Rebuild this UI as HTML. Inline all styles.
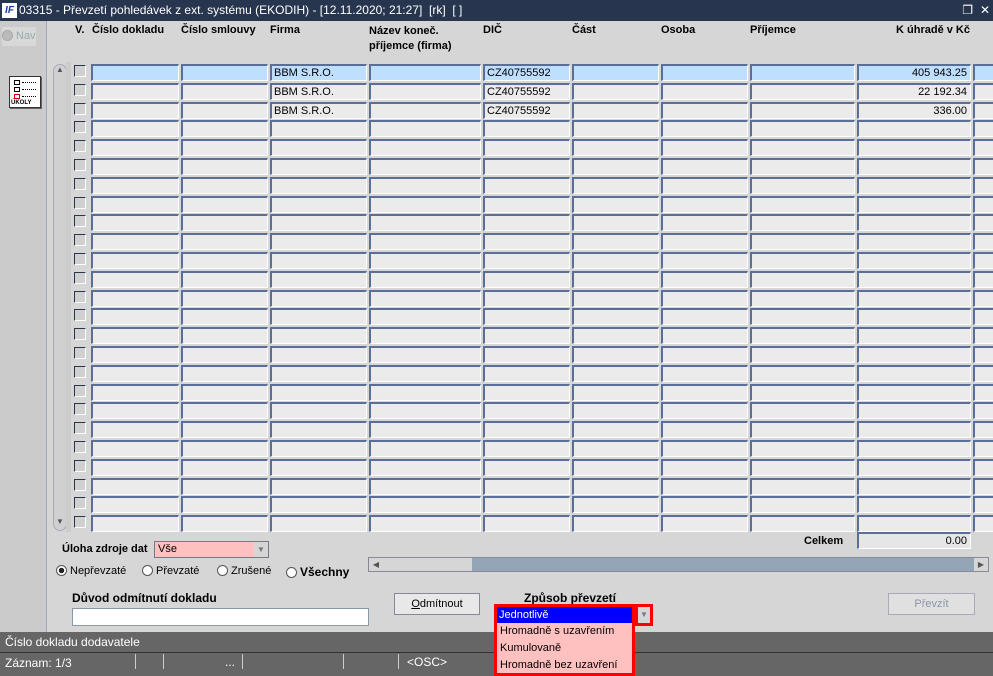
<!DOCTYPE html>
<html><head><meta charset="utf-8"><style>
*{box-sizing:border-box;margin:0;padding:0}
body{width:993px;height:676px;background:#d6d6d6;font-family:"Liberation Sans",Arial,sans-serif;font-size:11px;color:#000;position:relative;overflow:hidden}
.a{position:absolute}
.title{left:0;top:0;width:993px;height:21px;background:#27354f;color:#fff;font-size:12px;line-height:21px;padding-left:19px}
.left{left:0;top:21px;width:47px;height:611px;background:#cbcbcb;border-right:1px solid #9aa8c0}
.hdr{font-weight:bold;font-size:11px}
.cell{position:absolute;height:17px;background:#ebebeb;border-top:2px solid #5a6e96;border-left:2px solid #5a6e96;border-bottom:1px solid #fff;border-right:1px solid #fff;line-height:14px;padding-left:2px;white-space:nowrap}
.sel .cell{background:#bfdfff}
.cb{position:absolute;width:12px;height:12px;background:#d0d0d0;border-top:1px solid #2b3550;border-left:1px solid #2b3550;border-bottom:1px solid #fff;border-right:1px solid #fff}
.r{text-align:right;padding-right:3px}
.status{left:0;top:632px;width:993px;height:44px;background:#666;color:#fff;font-size:12px}
.radio{display:inline-block;width:11px;height:11px;border-radius:50%;background:#fff;border:1px solid #555;vertical-align:-2px;margin-right:3px}
</style></head><body>
<div class="a title"><span class="a" style="left:2px;top:3px;width:15px;height:15px;background:#fff;color:#1a3a9a;font-size:10px;line-height:15px;font-style:italic;font-weight:bold;text-align:center">IF</span>03315 - Převzetí pohledávek z ext. systému (EKODIH) - [12.11.2020; 21:27]&nbsp; [rk]&nbsp; [ ]<span class="a" style="right:20px;top:0">&#x2750;</span><span class="a" style="right:3px;top:0">✕</span></div>
<div class="a left"></div>
<div class="a" style="left:2px;top:27px;width:34px;height:19px;background:#d8d8d8;color:#9aa;font-size:11px;line-height:19px"><span class="radio" style="background:#bbb;border-color:#aaa"></span>Nav</div>
<div class="a" style="left:9px;top:76px;width:32px;height:32px;background:#fff;border:1px solid #333;box-shadow:1px 1px 0 #666">
<div class="a" style="left:4px;top:3px;width:6px;height:5px;border:1px solid #000"></div><div class="a" style="left:12px;top:5px;width:14px;border-top:1px dotted #000"></div>
<div class="a" style="left:4px;top:10px;width:6px;height:5px;border:1px solid #000"></div><div class="a" style="left:12px;top:12px;width:14px;border-top:1px dotted #000"></div>
<div class="a" style="left:4px;top:17px;width:6px;height:5px;border:1px solid #c00"></div><div class="a" style="left:12px;top:19px;width:14px;border-top:1px dotted #000"></div>
<div class="a" style="left:1px;top:23px;font-size:6px;font-weight:bold">ÚKOLY</div></div>

<div class="a hdr" style="left:75px;top:24px">V.</div>
<div class="a hdr" style="left:92px;top:24px">Číslo dokladu</div>
<div class="a hdr" style="left:181px;top:24px">Číslo smlouvy</div>
<div class="a hdr" style="left:270px;top:24px">Firma</div>
<div class="a hdr" style="left:369px;top:24px;line-height:15px">Název koneč.<br>příjemce (firma)</div>
<div class="a hdr" style="left:483px;top:24px">DIČ</div>
<div class="a hdr" style="left:572px;top:24px">Část</div>
<div class="a hdr" style="left:661px;top:24px">Osoba</div>
<div class="a hdr" style="left:750px;top:24px">Příjemce</div>
<div class="a hdr" style="left:857px;top:24px;width:113px;text-align:right">K úhradě v Kč</div>

<div class="a" style="left:53px;top:64px;width:14px;height:467px;background:#d0d0d0;border:1px solid #aab;border-radius:7px"></div>
<div class="a" style="left:54px;top:65px;width:12px;height:12px;font-size:8px;color:#556;text-align:center">▲</div>
<div class="a" style="left:54px;top:517px;width:12px;height:12px;font-size:8px;color:#556;text-align:center">▼</div>
<div class="a" style="left:66px;top:62px;width:5px;height:470px;background:#ccc"></div>

<div id="grid"></div>
<script>
var cols=[[91,88],[181,87],[270,97],[369,112],[483,87],[572,87],[661,87],[750,105],[857,114],[973,22]];
var data=[["","","BBM S.R.O.","","CZ40755592","","","","405 943.25",""],["","","BBM S.R.O.","","CZ40755592","","","","22 192.34",""],["","","BBM S.R.O.","","CZ40755592","","","","336.00",""]];
var h='';
for(var i=0;i<25;i++){var y=Math.round(64+i*18.8);
h+='<div'+(i==0?' class="sel"':'')+'><div class="cb" style="left:74px;top:'+(y+1)+'px"></div>';
for(var j=0;j<cols.length;j++){var t=(data[i]||[])[j]||'';
h+='<div class="cell'+(j==8?' r':'')+'" style="left:'+cols[j][0]+'px;top:'+y+'px;width:'+cols[j][1]+'px">'+t+'</div>';}
h+='</div>';}
document.getElementById('grid').innerHTML=h;
</script>

<div class="a hdr" style="left:804px;top:535px">Celkem</div>
<div class="cell r" style="left:857px;top:532px;width:114px;background:#e6e6e6">0.00</div>
<div class="a hdr" style="left:62px;top:543px;font-size:11px">Úloha zdroje dat</div>
<div class="a" style="left:154px;top:541px;width:115px;height:17px;background:#ffc0c0;border:1px solid #778;padding-left:3px;line-height:15px">Vše<span class="a" style="right:0;top:0;width:14px;height:15px;background:#d6d6d6;color:#777;font-size:8px;text-align:center">▼</span></div>
<div class="a" style="left:56px;top:565px;font-size:11px"><span class="radio" style="background:radial-gradient(#222 40%,#fff 45%)"></span>Nepřevzaté</div>
<div class="a" style="left:142px;top:565px"><span class="radio"></span>Převzaté</div>
<div class="a" style="left:217px;top:565px"><span class="radio"></span>Zrušené</div>
<div class="a" style="left:286px;top:565px;font-weight:bold;font-size:12px"><span class="radio"></span>Všechny</div>
<div class="a" style="left:368px;top:557px;width:621px;height:15px;background:#95a5b8;border:1px solid #889"></div>
<div class="a" style="left:369px;top:558px;width:14px;height:13px;background:#d6d6d6;font-size:8px;color:#555;text-align:center;line-height:13px">◀</div>
<div class="a" style="left:383px;top:558px;width:89px;height:13px;background:#d6d6d6"></div>
<div class="a" style="left:974px;top:558px;width:14px;height:13px;background:#d6d6d6;font-size:8px;color:#555;text-align:center;line-height:13px">▶</div>

<div class="a hdr" style="left:72px;top:591px;font-size:12px">Důvod odmítnutí dokladu</div>
<div class="a" style="left:72px;top:608px;width:297px;height:18px;background:#fff;border:1px solid #8899aa"></div>
<div class="a" style="left:394px;top:593px;width:86px;height:22px;background:#e8e8e8;border:1px solid #889;text-align:center;line-height:20px"><u>O</u>dmítnout</div>
<div class="a hdr" style="left:524px;top:591px;font-size:12px">Způsob převzetí</div>
<div class="a" style="left:888px;top:593px;width:87px;height:22px;background:#e0e0e0;border:1px solid #aab;color:#8a95a5;text-align:center;line-height:20px">Převzít</div>

<div class="a status">
<div class="a" style="left:0;top:0;width:993px;height:21px;border-bottom:1px solid #333;padding-left:5px;line-height:21px">Číslo dokladu dodavatele</div>
<div class="a" style="left:5px;top:23px;line-height:16px">Záznam: 1/3</div>
<div class="a" style="left:135px;top:22px;height:15px;border-left:1px solid #ccc"></div>
<div class="a" style="left:163px;top:22px;height:15px;border-left:1px solid #ccc"></div>
<div class="a" style="left:225px;top:23px">...</div>
<div class="a" style="left:242px;top:22px;height:15px;border-left:1px solid #ccc"></div>
<div class="a" style="left:343px;top:22px;height:15px;border-left:1px solid #ccc"></div>
<div class="a" style="left:398px;top:22px;height:15px;border-left:1px solid #ccc"></div>
<div class="a" style="left:407px;top:23px">&lt;OSC&gt;</div>
</div>

<div class="a" style="left:494px;top:604px;width:141px;height:72px;background:#ffc0c0;border:3px solid #f00;font-size:11px;line-height:17px">
<div style="background:#0000ff;color:#fff;padding-left:2px;height:16px">Jednotlivě</div>
<div style="padding-left:3px">Hromadně s uzavřením</div>
<div style="padding-left:3px">Kumulovaně</div>
<div style="padding-left:3px">Hromadně bez uzavření</div></div>
<div class="a" style="left:635px;top:604px;width:18px;height:22px;background:#d6d6d6;border:3px solid #f00;color:#778;font-size:8px;text-align:center;line-height:16px">▼</div>
</body></html>
